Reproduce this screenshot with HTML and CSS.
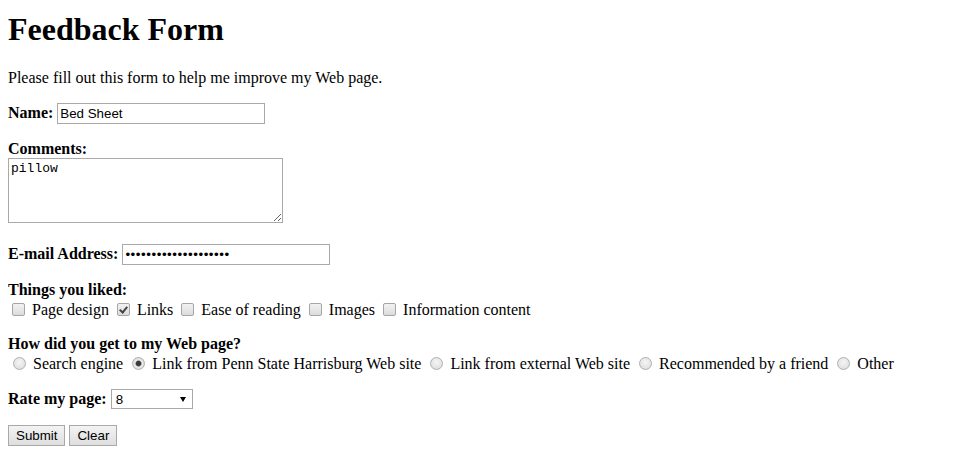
FILE: index.html
```html
<!DOCTYPE html>
<html>
<head>
<meta charset="utf-8">
<title>Feedback Form</title>
<link rel="stylesheet" href="styles.css">
</head>
<body>
<h1 class="title">Feedback Form</h1>
<p class="intro">Please fill out this form to help me improve my Web page.</p>
<form class="form">
<p class="row"><b>Name:</b> <input class="field" type="text" value="Bed Sheet"></p>
<p class="row"><b>Comments:</b><br><textarea class="comments">pillow</textarea></p>
<p class="row"><b>E-mail Address:</b> <input class="field secret" type="password" value="xxxxxxxxxxxxxxxxxxxx"></p>
<p class="row"><b>Things you liked:</b><br>
<input class="check" type="checkbox"> Page design
<input class="check" type="checkbox" checked> Links
<input class="check" type="checkbox"> Ease of reading
<input class="check" type="checkbox"> Images
<input class="check" type="checkbox"> Information content
</p>
<p class="row"><b>How did you get to my Web page?</b><br>
<input class="radio" type="radio" name="how"> Search engine
<input class="radio" type="radio" name="how" checked> Link from Penn State Harrisburg Web site
<input class="radio" type="radio" name="how"> Link from external Web site
<input class="radio" type="radio" name="how"> Recommended by a friend
<input class="radio" type="radio" name="how"> Other
</p>
<p class="row"><b>Rate my page:</b> <span class="select-wrap"><select class="rate">
<option>1</option><option>2</option><option>3</option><option>4</option><option>5</option>
<option>6</option><option>7</option><option selected>8</option><option>9</option><option>10</option>
</select></span></p>
<p class="row"><input class="btn" type="submit" value="Submit"> <input class="btn" type="reset" value="Clear"></p>
</form>
</body>
</html>
```
FILE: styles.css
```css
html, body {
  background: #fff;
}
body {
  margin: 0 8px 8px;
  font-family: "Liberation Serif", "Times New Roman", serif;
  font-size: 16px;
  color: #000;
}
.title {
  font-size: 32px;
  font-weight: bold;
  margin: 11px 0 21px;
}
.intro {
  margin: 16px 0;
}
.form {
  margin: 0;
}
.row {
  margin: 16px 0;
}
.field {
  box-sizing: border-box;
  width: 208px;
  height: 21px;
  border: 1px solid #a9a9a9;
  padding: 1px 2px;
  margin: 0;
  font-family: "Liberation Sans", Arial, sans-serif;
  font-size: 13.333px;
  color: #000;
  background: #fff;
}
.secret {
  letter-spacing: 0.55px;
}
.comments {
  box-sizing: border-box;
  width: 275px;
  height: 65px;
  border: 1px solid #a9a9a9;
  padding: 2px;
  margin: 0 0 1px;
  font-family: "Liberation Mono", "DejaVu Sans Mono", monospace;
  font-size: 13px;
  color: #000;
  resize: both;
}
.check {
  appearance: none;
  -webkit-appearance: none;
  box-sizing: border-box;
  width: 13px;
  height: 13px;
  margin: 4px 3px 0 4px;
  border: 1px solid #a6a6a6;
  border-radius: 2px;
  background: linear-gradient(#f2f2f2, #dcdcdc);
  vertical-align: -1px;
  position: relative;
}
.check:checked::after {
  content: "";
  position: absolute;
  left: 3px;
  top: 1px;
  width: 3px;
  height: 6px;
  border: solid #444;
  border-width: 0 2px 2px 0;
  transform: rotate(40deg);
}
.radio {
  appearance: none;
  -webkit-appearance: none;
  box-sizing: border-box;
  width: 13px;
  height: 13px;
  margin: 4px 3px 0 5px;
  border: 1px solid #b0b0b0;
  border-radius: 50%;
  background: radial-gradient(circle at 50% 40%, #f6f6f6, #d8d8d8);
  vertical-align: -1px;
}
.radio:checked {
  background: radial-gradient(circle, #3a3a3a 0 2.2px, #8a8a8a 2.8px, #ececec 3.5px, #d8d8d8 6px);
}
.select-wrap {
  display: inline-block;
  position: relative;
}
.select-wrap::after {
  content: "";
  position: absolute;
  right: 7px;
  top: 8px;
  border-left: 3.5px solid transparent;
  border-right: 3.5px solid transparent;
  border-top: 5px solid #000;
  pointer-events: none;
}
.rate {
  appearance: none;
  -webkit-appearance: none;
  box-sizing: border-box;
  width: 82px;
  height: 20px;
  border: 1px solid #a9a9a9;
  border-radius: 0;
  padding: 0 4px;
  margin: 0;
  background: #fff;
  font-family: "Liberation Sans", Arial, sans-serif;
  font-size: 13.333px;
  color: #000;
}
.btn {
  appearance: none;
  -webkit-appearance: none;
  box-sizing: border-box;
  height: 21px;
  padding: 1px 7px;
  margin: 0;
  border: 1px solid #a9a9a9;
  border-radius: 0;
  background: linear-gradient(#f3f3f3, #dedede);
  font-family: "Liberation Sans", Arial, sans-serif;
  font-size: 13.333px;
  color: #000;
}
```
